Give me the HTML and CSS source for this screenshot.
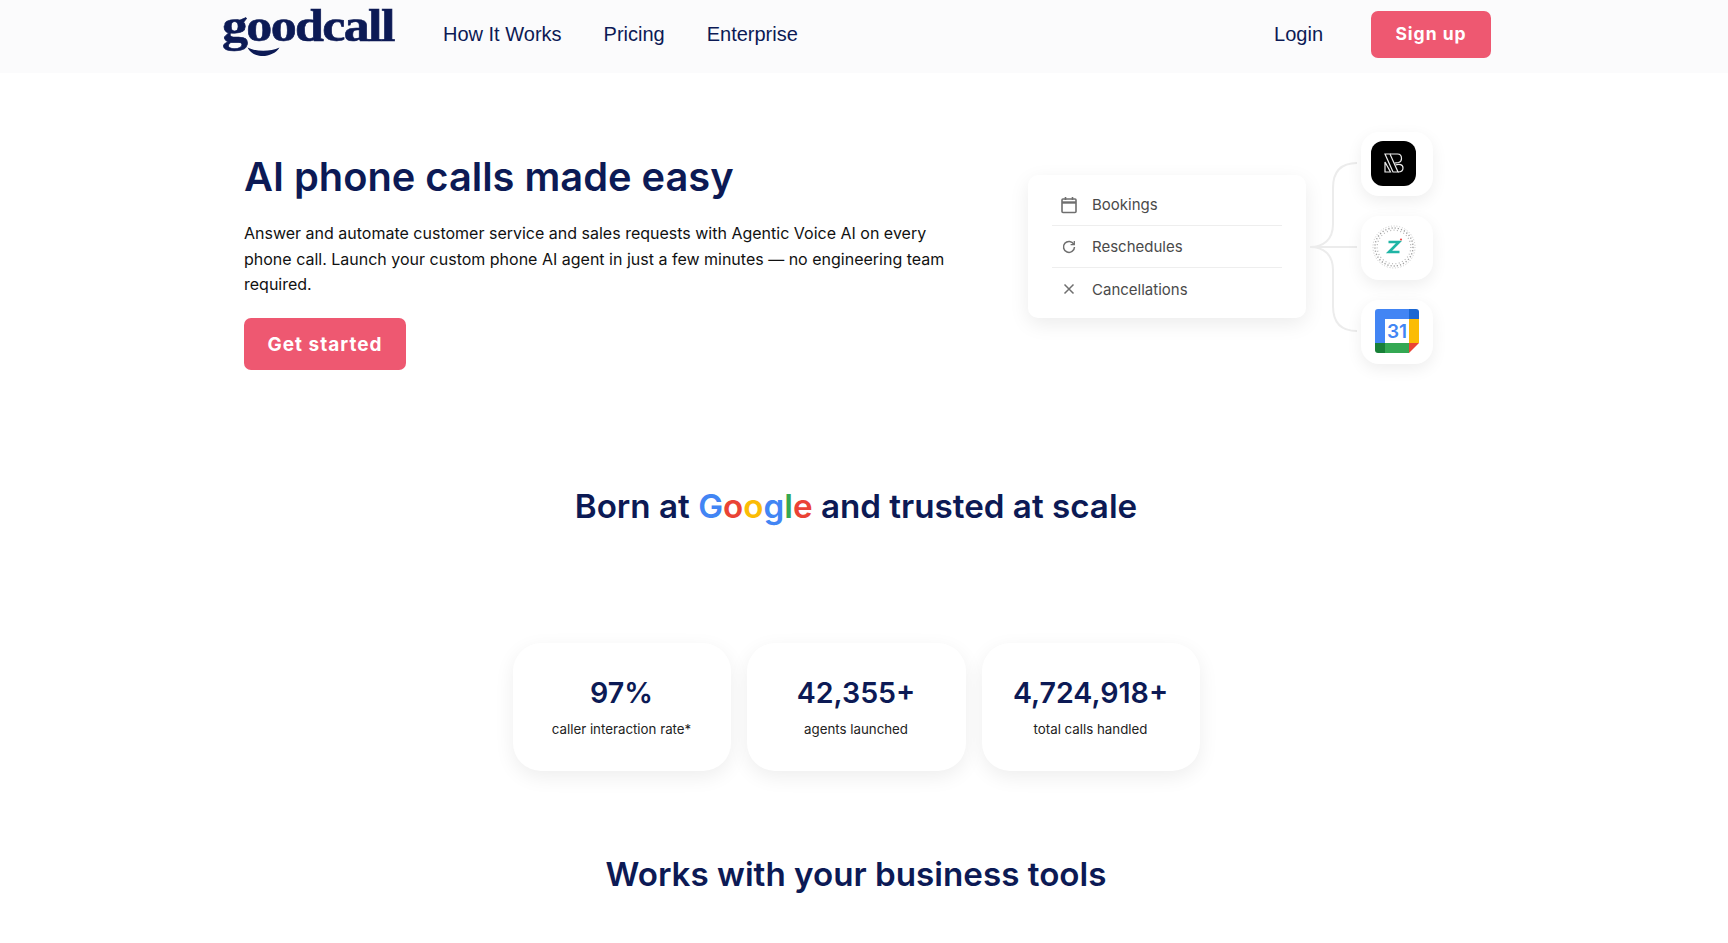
FILE: index.html
```html
<!DOCTYPE html>
<html lang="en">
<head>
  <meta charset="UTF-8">
  <title>Goodcall</title>
  <link rel="stylesheet" href="styles.css">
</head>
<body>

  <header class="topbar">
    <div class="topbar-inner">
      <a class="logo" href="#">
        <span class="logo-word">goodcall</span>
        <svg class="logo-smile" width="33" height="10" viewBox="0 0 33 10"><path d="M0.500 0.500C8 4.500 23 5 32.500 0.500C29 6.500 21 9.500 14 9C8 8.500 3 5.500 0.500 0.500Z" fill="#0c1a55"/></svg>
      </a>
      <nav class="main-nav">
        <a href="#">How It Works</a>
        <a href="#">Pricing</a>
        <a href="#">Enterprise</a>
      </nav>
      <a class="login" href="#">Login</a>
      <a class="btn btn-small" href="#">Sign up</a>
    </div>
  </header>

  <section class="hero">
    <div class="hero-text">
      <h1>AI phone calls made easy</h1>
      <p>Answer and automate customer service and sales requests with Agentic Voice AI on every phone call. Launch your custom phone AI agent in just a few minutes — no engineering team required.</p>
      <a class="btn btn-large" href="#">Get started</a>
    </div>

    <div class="diagram">
      <ul class="booking-card">
        <li>
          <svg width="18" height="18" viewBox="0 0 18 18" fill="none" stroke="#6f6f6f" stroke-width="1.600"><rect x="2" y="3" width="14" height="13.500" rx="1"/><path d="M2 6.500H16" stroke-width="2.400"/><path d="M5.500 1V4M12.500 1V4"/></svg>
          Bookings
        </li>
        <li>
          <svg width="18" height="18" viewBox="0 0 18 18" fill="none" stroke="#6f6f6f" stroke-width="1.500"><path d="M13.800 6.200A5.500 5.500 0 1 0 14.500 9"/><path d="M14.300 3V6.700H10.600" stroke-width="1.300"/></svg>
          Reschedules
        </li>
        <li>
          <svg width="18" height="18" viewBox="0 0 18 18" fill="none" stroke="#6f6f6f" stroke-width="1.500"><path d="M4.500 4.500L13.500 13.500M13.500 4.500L4.500 13.500"/></svg>
          Cancellations
        </li>
      </ul>

      <svg class="connector" width="48" height="170" viewBox="0 0 48 170" fill="none" stroke="#ececec" stroke-width="2">
        <path d="M1 85H48"/>
        <path d="M1 85C14 85 24 78 24 62V26C24 10 32 1 48 1"/>
        <path d="M1 85C14 85 24 92 24 108V144C24 160 32 169 48 169"/>
      </svg>

      <div class="app-tiles">
        <div class="tile">
          <div class="tile-black">
            <svg width="20" height="20" viewBox="0 0 20 20" fill="none" stroke="#ececec" stroke-width="1.200"><path d="M1 1H6L14 19H9Z"/><path d="M1 9L6.500 19H1Z"/><path d="M6 1H13.500C16 1 17.500 3 17.500 5.500C17.500 7.500 16.500 9 14.500 9.500L10.500 10.200"/><path d="M11.500 12C15 10.500 19 11.500 19 15C19 17.500 17 19 14 19"/></svg>
          </div>
        </div>
        <div class="tile">
          <svg class="zoho-badge" width="44" height="44" viewBox="0 0 44 44">
            <circle cx="22" cy="22" r="21" fill="none" stroke="#c8c8c8" stroke-width="1" stroke-dasharray="1 1.800"/>
            <circle cx="22" cy="22" r="19" fill="none" stroke="#a0a0a0" stroke-width="1.400" stroke-dasharray="1.200 2"/>
            <circle cx="22" cy="22" r="16.800" fill="none" stroke="#b5b5b5" stroke-width="1.200" stroke-dasharray="1 2.400"/>
            <path d="M16.500 17H27L17 27H27.500" fill="none" stroke="#1fb5a5" stroke-width="2.600"/>
            <circle cx="29" cy="14.500" r="1.100" fill="#ef4b4b"/>
          </svg>
        </div>
        <div class="tile">
          <svg class="cal-icon" width="44" height="44" viewBox="0 0 44 44">
            <path d="M3 0H34V10H10V34H0V3C0 1 1 0 3 0Z" fill="#4285f4"/>
            <path d="M34 0H41C43 0 44 1 44 3V10H34Z" fill="#1a67d2"/>
            <rect x="34" y="10" width="10" height="24" fill="#fbbc04"/>
            <rect x="10" y="34" width="24" height="10" fill="#34a853"/>
            <path d="M0 34H10V44H3C1 44 0 43 0 41Z" fill="#188038"/>
            <path d="M34 34H44L34 44Z" fill="#ea4335"/>
            <text class="cal-day" x="22" y="28.500" text-anchor="middle">31</text>
          </svg>
        </div>
      </div>
    </div>
  </section>

  <h2 class="trust-title">Born at <span class="google"><span class="g-blue">G</span><span class="g-red">o</span><span class="g-yellow">o</span><span class="g-blue">g</span><span class="g-green">l</span><span class="g-red">e</span></span> and trusted at scale</h2>

  <section class="stats">
    <div class="stat">
      <b>97%</b>
      <span>caller interaction rate*</span>
    </div>
    <div class="stat stat-mid">
      <b>42,355+</b>
      <span>agents launched</span>
    </div>
    <div class="stat">
      <b>4,724,918+</b>
      <span>total calls handled</span>
    </div>
  </section>

  <h2 class="tools-title">Works with your business tools</h2>

</body>
</html>
```

FILE: styles.css
```css
* {
  box-sizing: border-box;
}

html,
body {
  height: 943px;
  overflow: hidden;
}

body {
  margin: 0;
  font-family: 'Inter', 'Liberation Sans', sans-serif;
  color: #111;
  background-color: #fff;
}

a {
  text-decoration: none;
  color: inherit;
}

.topbar {
  height: 73px;
  background-color: #fbfbfc;
}

.topbar-inner {
  width: 1712px;
  height: 100%;
  padding: 0 221px 0 222px;
  display: flex;
  align-items: flex-start;
  color: #0c1a55;
  font-family: 'Liberation Sans', sans-serif;
  font-size: 20px;
}

.logo {
  width: 221px;
  flex: none;
  position: relative;
  height: 60px;
  padding-top: 2px;
}

.logo-word {
  display: inline-block;
  font-family: 'Liberation Serif', serif;
  font-weight: 700;
  font-size: 52px;
  line-height: 48px;
  letter-spacing: -1.650px;
  color: #0c1a55;
  -webkit-text-stroke: 0.700px #0c1a55;
  transform: scaleY(0.88);
}

.logo-smile {
  position: absolute;
  left: 25px;
  top: 47px;
}

.main-nav {
  display: flex;
  gap: 42px;
  padding-top: 22px;
  line-height: 24px;
}

.login {
  margin-left: auto;
  padding-top: 22px;
  line-height: 24px;
}

.btn {
  display: inline-block;
  background-color: #ee5871;
  color: #fff;
  font-family: 'Inter', 'Liberation Sans', sans-serif;
  font-weight: 700;
  text-align: center;
  border-radius: 7px;
  letter-spacing: 1px;
}

.btn-small {
  width: 120px;
  height: 47px;
  margin: 11px 0 0 48px;
  line-height: 45px;
  font-size: 17.500px;
}

.btn-large {
  width: 162px;
  height: 52px;
  line-height: 53px;
  font-size: 19px;
}

.hero {
  width: 1712px;
  padding: 59px 0 0 244px;
  display: flex;
}

.hero-text {
  width: 784px;
  padding-top: 15px;
}

.hero-text h1 {
  margin: 0;
  font-size: 39.800px;
  line-height: 60px;
  font-weight: 600;
  color: #0c1a55;
  white-space: nowrap;
}

.hero-text p {
  width: 710px;
  margin: 14px 0 20px;
  font-size: 16px;
  line-height: 25.500px;
  color: #111;
}

.diagram {
  display: flex;
  align-items: center;
  height: 232px;
}

.booking-card {
  list-style: none;
  margin: 0 0 3px;
  padding: 9px 24px 0;
  width: 278px;
  height: 143px;
  border-radius: 10px;
  background-color: #fff;
  box-shadow: 0 6px 20px rgba(0, 0, 0, 0.08);
}

.booking-card li {
  display: flex;
  align-items: center;
  gap: 14px;
  height: 42px;
  padding-left: 8px;
  font-size: 15px;
  color: #4a4a4a;
  border-bottom: 1px solid #eee;
}

.booking-card li:last-child {
  border-bottom: none;
}

.connector {
  flex: none;
  margin: 0 4px 2px 3px;
}

.app-tiles {
  display: flex;
  flex-direction: column;
  gap: 20px;
}

.tile {
  width: 72px;
  height: 64px;
  border-radius: 18px;
  background-color: #fff;
  box-shadow: 0 5px 16px rgba(0, 0, 0, 0.07);
  display: flex;
  align-items: center;
  justify-content: center;
}

.tile-black,
.zoho-badge {
  margin: 0 7px 2px 0;
}

.cal-icon {
  margin-bottom: 2px;
}

.tile-black {
  width: 45px;
  height: 45px;
  border-radius: 12px;
  background-color: #000;
  display: flex;
  align-items: center;
  justify-content: center;
}

.cal-day {
  font-size: 19px;
  font-weight: 600;
  fill: #4285f4;
}

.trust-title,
.tools-title {
  margin: 0;
  width: 1712px;
  text-align: center;
  font-size: 33.200px;
  line-height: 50px;
  font-weight: 600;
  color: #0c1a55;
}

.trust-title {
  margin-top: 111px;
}

.tools-title {
  margin-top: 78px;
}

.g-blue { color: #4285f4; }
.g-red { color: #ea4335; }
.g-yellow { color: #fbbc05; }
.g-green { color: #34a853; }

.stats {
  display: flex;
  justify-content: center;
  gap: 16px;
  width: 1712px;
  margin-top: 112px;
}

.stat {
  width: 218px;
  height: 128px;
  padding-top: 30px;
  border-radius: 28px;
  text-align: center;
  background-color: #fff;
  box-shadow: 0 6px 20px rgba(0, 0, 0, 0.07);
}

.stat-mid {
  width: 219px;
}

.stat b {
  display: block;
  font-size: 28.600px;
  line-height: 40px;
  font-weight: 600;
  color: #0c1a55;
}

.stat span {
  display: block;
  margin-top: 6px;
  font-size: 13.300px;
  line-height: 20px;
  color: #222;
}
```
